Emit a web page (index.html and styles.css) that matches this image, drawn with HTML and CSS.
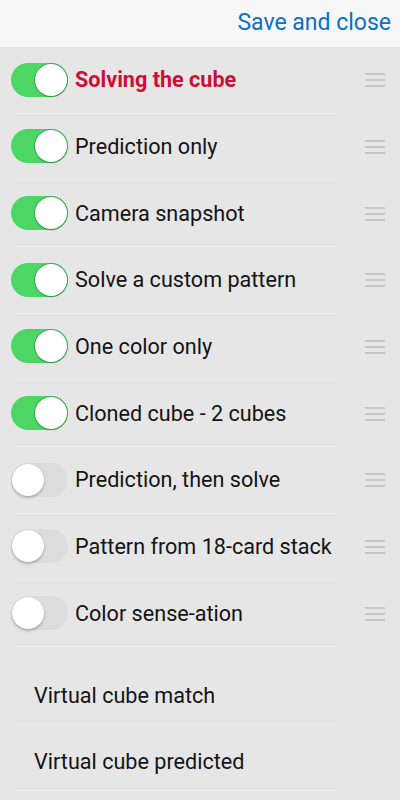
FILE: index.html
```html
<!DOCTYPE html>
<html>
<head>
<meta charset="utf-8">
<link rel="stylesheet" href="styles.css">
</head>
<body>
<header class="topbar">
  <span class="save">Save and close</span>
</header>
<main class="list">
  <div class="row">
    <span class="toggle on"><span class="knob"></span></span>
    <span class="label active">Solving the cube</span>
    <span class="handle"><i></i><i></i><i></i></span>
  </div>
  <div class="row">
    <span class="toggle on"><span class="knob"></span></span>
    <span class="label">Prediction only</span>
    <span class="handle"><i></i><i></i><i></i></span>
  </div>
  <div class="row">
    <span class="toggle on"><span class="knob"></span></span>
    <span class="label">Camera snapshot</span>
    <span class="handle"><i></i><i></i><i></i></span>
  </div>
  <div class="row">
    <span class="toggle on"><span class="knob"></span></span>
    <span class="label">Solve a custom pattern</span>
    <span class="handle"><i></i><i></i><i></i></span>
  </div>
  <div class="row">
    <span class="toggle on"><span class="knob"></span></span>
    <span class="label">One color only</span>
    <span class="handle"><i></i><i></i><i></i></span>
  </div>
  <div class="row">
    <span class="toggle on"><span class="knob"></span></span>
    <span class="label">Cloned cube - 2 cubes</span>
    <span class="handle"><i></i><i></i><i></i></span>
  </div>
  <div class="row">
    <span class="toggle"><span class="knob"></span></span>
    <span class="label">Prediction, then solve</span>
    <span class="handle"><i></i><i></i><i></i></span>
  </div>
  <div class="row">
    <span class="toggle"><span class="knob"></span></span>
    <span class="label">Pattern from 18-card stack</span>
    <span class="handle"><i></i><i></i><i></i></span>
  </div>
  <div class="row">
    <span class="toggle"><span class="knob"></span></span>
    <span class="label">Color sense-ation</span>
    <span class="handle"><i></i><i></i><i></i></span>
  </div>
  <div class="plain first">
    <span class="label">Virtual cube match</span>
  </div>
  <div class="plain">
    <span class="label">Virtual cube predicted</span>
  </div>
</main>
</body>
</html>
```
FILE: styles.css
```css
* { box-sizing: border-box; }
html, body {
  margin: 0;
  padding: 0;
  height: 100%;
}
body {
  background: #e6e6e6;
  font-family: Roboto, "Liberation Sans", sans-serif;
  color: #141414;
  overflow: hidden;
}
.topbar {
  height: 47px;
  background: #f7f7f7;
  display: flex;
  align-items: center;
  justify-content: flex-end;
  padding-right: 9px;
}
.save {
  font-size: 23px;
  color: #0b70c6;
  line-height: 1;
  margin-top: -2px;
}
.list {
  display: flex;
  flex-direction: column;
}
.row {
  height: 66.67px;
  display: flex;
  align-items: center;
  padding-left: 11px;
  position: relative;
}
.row::after, .plain::after {
  content: "";
  position: absolute;
  left: 16px;
  width: 320px;
  bottom: 0;
  height: 1px;
  background: #eeeeee;
}
.toggle {
  position: relative;
  width: 57px;
  height: 34px;
  border-radius: 17px;
  background: #dcdcdc;
  flex: none;
  margin-top: -1px;
}
.toggle.on {
  background: #4cd664;
}
.knob {
  position: absolute;
  top: 1px;
  left: 1px;
  width: 32px;
  height: 32px;
  border-radius: 50%;
  background: #ffffff;
  box-shadow: 0 2px 3px rgba(0, 0, 0, 0.22), 0 0 1px rgba(0, 0, 0, 0.15);
}
.toggle.on .knob {
  left: 24px;
  box-shadow: 0 1px 2px rgba(0, 0, 0, 0.2), 0 0 0 1px #3cb552;
}
.label {
  font-size: 21.6px;
  line-height: 24px;
  margin-left: 7px;
  flex: 1;
  white-space: nowrap;
}
.label.active {
  color: #cf0d36;
  font-weight: 700;
}
.handle {
  width: 20px;
  margin-right: 15px;
  display: flex;
  flex-direction: column;
  gap: 4px;
  flex: none;
}
.handle i {
  display: block;
  height: 2px;
  background: #c6c6c6;
}
.plain {
  height: 66px;
  display: flex;
  align-items: center;
  padding-left: 27px;
  padding-top: 8px;
  position: relative;
}
.plain.first {
  margin-top: 12px;
}
```
